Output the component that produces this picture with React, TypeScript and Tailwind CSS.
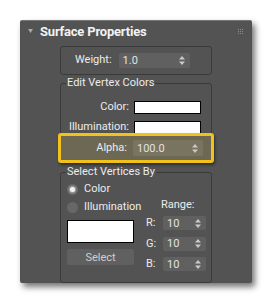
import React from "react";

// ─── Small pieces ────────────────────────────────────────────────────────────

function SpinArrows() {
  return (
    <svg width="6" height="9" viewBox="0 0 6 9" className="shrink-0">
      <path d="M3 0 L6 3.5 L0 3.5 Z" fill="#c9c9c9" />
      <path d="M0 5.5 L6 5.5 L3 9 Z" fill="#c9c9c9" />
    </svg>
  );
}

function Spinner({ value, className }: { value: string; className: string }) {
  return (
    <div className={`flex items-center justify-between pl-[4px] pr-[5px] rounded-[2px] ${className}`}>
      <span className="text-[#e2e2e2] leading-none">{value}</span>
      <SpinArrows />
    </div>
  );
}

function Swatch({ className }: { className: string }) {
  return <div className={`bg-white border border-black ${className}`} />;
}

function Radio({ checked, label }: { checked?: boolean; label: string }) {
  return (
    <div className="flex items-center h-[18px] gap-[6px] whitespace-nowrap">
      <div className="shrink-0 w-[11px] h-[11px] rounded-full bg-[#676767] flex items-center justify-center">
        {checked && <div className="w-[5px] h-[5px] rounded-full bg-[#f2f2f2] shadow-[0_0_2px_1px_rgba(255,255,255,0.5)]" />}
      </div>
      <span className="text-[#ececec]">{label}</span>
    </div>
  );
}

function Grip() {
  return (
    <div className="grid grid-cols-3 gap-[1px]">
      {Array.from({ length: 9 }).map((_, i) => (
        <div key={i} className="w-[1px] h-[1px] bg-[#8c8c8c]" />
      ))}
    </div>
  );
}

// ─── Panel ───────────────────────────────────────────────────────────────────

export default function App() {
  return (
    <div
      className="w-[272px] h-[305px] bg-white p-5 text-[11px]"
      style={{ fontFamily: "Roboto, 'Noto Sans', sans-serif" }}
    >
      <div className="w-[232px] h-[263px] bg-[#535353] border-t border-[#767676] rounded-[2px] shadow-[3px_4px_6px_rgba(0,0,0,0.55)] flex flex-col">
        {/* Header */}
        <div className="h-[21px] flex items-center pl-[8px] pr-[9px]">
          <svg width="5" height="4" viewBox="0 0 5 4" className="mt-[-1px]">
            <path d="M0 0 L5 0 L2.5 4 Z" fill="#a9a9a9" />
          </svg>
          <span className="ml-[7px] text-[13px] font-bold text-[#f2f2f2] tracking-[-0.2px]">Surface Properties</span>
          <div className="ml-auto">
            <Grip />
          </div>
        </div>

        {/* Weight */}
        <div className="mt-[4px] mx-auto w-[152px] h-[29px] border border-[#3a3a3a] rounded-[3px] flex items-center pl-[14px]">
          <span className="text-[#ececec]">Weight:</span>
          <Spinner value="1.0" className="ml-[7px] w-[71px] h-[15px] bg-[#606060]" />
        </div>

        {/* Edit Vertex Colors */}
        <fieldset className="mt-[1px] mx-auto w-[152px] border border-[#3a3a3a] rounded-[3px]">
          <legend className="ml-[5px] px-[1px] h-[14px] leading-[14px] text-[#ececec]">Edit Vertex Colors</legend>
          <div className="flex flex-col pt-[7px]">
            <div className="h-[20px] flex items-center">
              <span className="w-[68px] text-right text-[#ececec]">Color:</span>
              <Swatch className="ml-[5px] w-[67px] h-[13px]" />
            </div>
            <div className="h-[20px] flex items-center">
              <span className="w-[68px] text-right text-[#ececec]">Illumination:</span>
              <Swatch className="ml-[5px] w-[67px] h-[13px]" />
            </div>
            <div className="relative z-10 -mt-[4px] -mx-[3px] -mb-[1px] h-[30px] border-[3px] border-[#f1c21b] rounded-[3px] bg-[#6d6853] shadow-[1px_2px_3px_rgba(0,0,0,0.45)] flex items-center">
              <span className="w-[66px] text-right text-[#ececec]">Alpha:</span>
              <Spinner value="100.0" className="ml-[6px] w-[70px] h-[16px] bg-[#79745f]" />
            </div>
          </div>
        </fieldset>

        {/* Select Vertices By */}
        <fieldset className="mt-[2px] mx-auto w-[152px] border border-[#3a3a3a] rounded-[3px]">
          <legend className="ml-[5px] px-[1px] h-[14px] leading-[14px] text-[#ececec]">Select Vertices By</legend>
          <div className="flex pl-[6px] pt-[1px] pb-[9px]">
            <div className="flex flex-col w-[67px]">
              <Radio checked label="Color" />
              <Radio label="Illumination" />
              <Swatch className="mt-[4px] w-[67px] h-[23px]" />
              <button className="mt-[6px] h-[16px] rounded-[2px] bg-[#606060] text-[#cfcfcf] leading-none">
                Select
              </button>
            </div>
            <div className="flex flex-col ml-[12px] pt-[18px]">
              <span className="ml-[15px] h-[14px] leading-[14px] text-[#ececec]">Range:</span>
              {["R:", "G:", "B:"].map((l, i) => (
                <div key={l} className={`flex items-center ${i === 0 ? "mt-[3px]" : "mt-[4px]"}`}>
                  <span className="w-[17px] text-[#ececec]">{l}</span>
                  <Spinner value="10" className="w-[43px] h-[14px] bg-[#606060]" />
                </div>
              ))}
            </div>
          </div>
        </fieldset>
      </div>
    </div>
  );
}
